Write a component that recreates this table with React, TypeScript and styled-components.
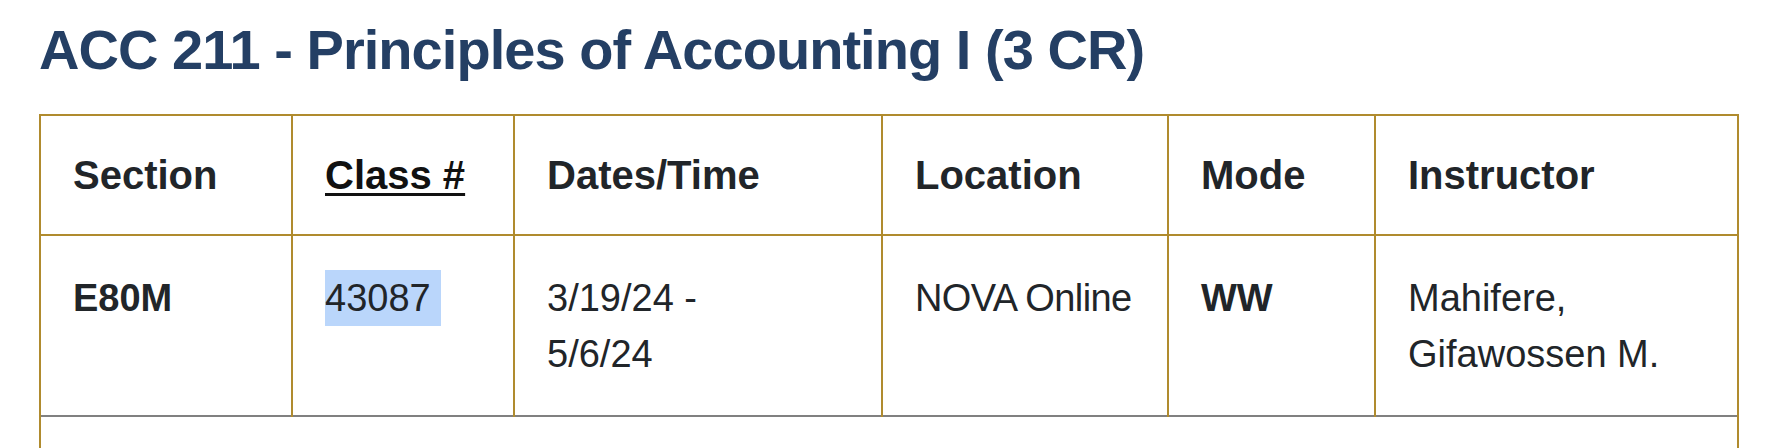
import React from "react";
import styled, { createGlobalStyle } from "styled-components";

const GlobalStyle = createGlobalStyle`
  html, body {
    margin: 0;
    padding: 0;
    background: #ffffff;
    overflow: hidden;
  }
  body {
    font-family: "Liberation Sans", Arial, sans-serif;
    color: #212529;
  }
`;

const Page = styled.main`
  padding: 16px 0 0 39px;
`;

const Title = styled.h1`
  margin: 0 0 31px;
  font-family: "Liberation Sans", Arial, sans-serif;
  font-weight: 700;
  font-size: 56px;
  line-height: 67px;
  letter-spacing: -0.95px;
  color: #243f64;
`;

const Table = styled.table`
  width: 1700px;
  table-layout: fixed;
  border-collapse: collapse;
`;

const gold = "#b08b2e";

const HeadCell = styled.th`
  border: 2px solid ${gold};
  padding: 35px 32px;
  text-align: left;
  vertical-align: middle;
  font-weight: 700;
  font-size: 40px;
  line-height: 48px;
  color: #212529;
`;

const SortLink = styled.a`
  color: #111111;
  text-decoration: underline;
  text-decoration-thickness: 3px;
  text-underline-offset: 4px;
  cursor: pointer;
`;

const Cell = styled.td<{ $bold?: boolean; $nowrap?: boolean }>`
  border: 2px solid ${gold};
  border-bottom-style: none;
  padding: 34px 32px 33px;
  vertical-align: top;
  font-size: 38px;
  line-height: 56px;
  font-weight: ${(p) => (p.$bold ? 700 : 400)};
  white-space: ${(p) => (p.$nowrap ? "nowrap" : "normal")};
  letter-spacing: ${(p) => (p.$nowrap ? "-0.6px" : "normal")};
  color: #212529;
`;

const Selected = styled.span`
  display: inline-block;
  background: #bad6fb;
  padding-right: 10px;
`;

const DetailCell = styled.td`
  border-top: 2px solid #808080;
  border-left: 2px solid ${gold};
  border-right: 2px solid ${gold};
  border-bottom: 2px solid ${gold};
  height: 90px;
`;

const columns = [252, 222, 368, 286, 207, 363];

export default function App() {
  return (
    <>
      <GlobalStyle />
      <Page>
        <Title>ACC 211 - Principles of Accounting I (3 CR)</Title>
        <Table>
          <colgroup>
            {columns.map((w, i) => (
              <col key={i} style={{ width: `${w}px` }} />
            ))}
          </colgroup>
          <thead>
            <tr>
              <HeadCell>Section</HeadCell>
              <HeadCell>
                <SortLink>Class #</SortLink>
              </HeadCell>
              <HeadCell>Dates/Time</HeadCell>
              <HeadCell>Location</HeadCell>
              <HeadCell>Mode</HeadCell>
              <HeadCell>Instructor</HeadCell>
            </tr>
          </thead>
          <tbody>
            <tr>
              <Cell $bold>E80M</Cell>
              <Cell>
                <Selected>43087</Selected>
              </Cell>
              <Cell>
                3/19/24 -<br />
                5/6/24
              </Cell>
              <Cell $nowrap>NOVA Online</Cell>
              <Cell $bold>WW</Cell>
              <Cell>
                Mahifere,
                <br />
                Gifawossen M.
              </Cell>
            </tr>
            <tr>
              <DetailCell colSpan={6} />
            </tr>
          </tbody>
        </Table>
      </Page>
    </>
  );
}
